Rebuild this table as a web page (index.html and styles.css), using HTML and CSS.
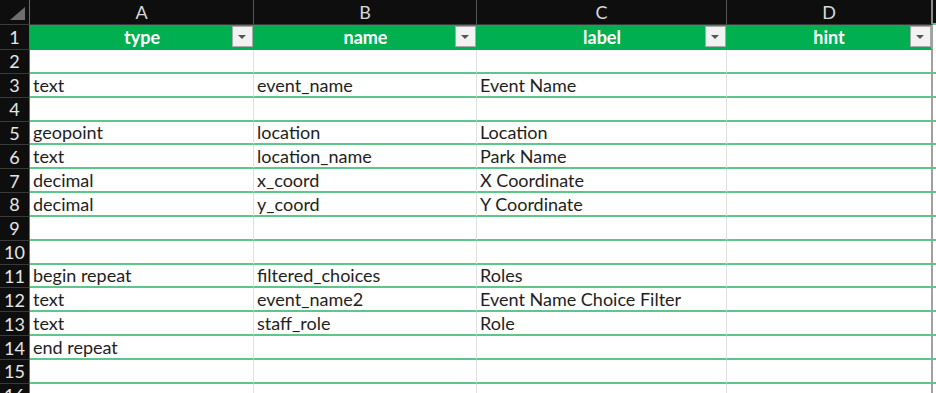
FILE: index.html
```html
<!DOCTYPE html>
<html>
<head>
<meta charset="utf-8">
<link rel="stylesheet" href="styles.css">
</head>
<body>
<div class="sheet">
  <div class="row colhead">
    <div class="rh corner"><span class="tri"></span></div>
    <div class="ch">A</div>
    <div class="ch">B</div>
    <div class="ch">C</div>
    <div class="ch last">D</div>
    <div class="ch rest"></div>
  </div>
  <div class="row thead">
    <div class="rh">1</div>
    <div class="th">type<span class="dd"></span></div>
    <div class="th">name<span class="dd"></span></div>
    <div class="th">label<span class="dd"></span></div>
    <div class="th last">hint<span class="dd"></span></div>
    <div class="rest"></div>
  </div>
  <div class="row"><div class="rh">2</div><div class="c"></div><div class="c"></div><div class="c"></div><div class="c last"></div><div class="rest"></div></div>
  <div class="row"><div class="rh">3</div><div class="c">text</div><div class="c">event_name</div><div class="c">Event Name</div><div class="c last"></div><div class="rest"></div></div>
  <div class="row"><div class="rh">4</div><div class="c"></div><div class="c"></div><div class="c"></div><div class="c last"></div><div class="rest"></div></div>
  <div class="row"><div class="rh">5</div><div class="c">geopoint</div><div class="c">location</div><div class="c">Location</div><div class="c last"></div><div class="rest"></div></div>
  <div class="row"><div class="rh">6</div><div class="c">text</div><div class="c">location_name</div><div class="c">Park Name</div><div class="c last"></div><div class="rest"></div></div>
  <div class="row"><div class="rh">7</div><div class="c">decimal</div><div class="c">x_coord</div><div class="c">X Coordinate</div><div class="c last"></div><div class="rest"></div></div>
  <div class="row"><div class="rh">8</div><div class="c">decimal</div><div class="c">y_coord</div><div class="c">Y Coordinate</div><div class="c last"></div><div class="rest"></div></div>
  <div class="row"><div class="rh">9</div><div class="c"></div><div class="c"></div><div class="c"></div><div class="c last"></div><div class="rest"></div></div>
  <div class="row"><div class="rh">10</div><div class="c"></div><div class="c"></div><div class="c"></div><div class="c last"></div><div class="rest"></div></div>
  <div class="row"><div class="rh">11</div><div class="c">begin repeat</div><div class="c">filtered_choices</div><div class="c">Roles</div><div class="c last"></div><div class="rest"></div></div>
  <div class="row"><div class="rh">12</div><div class="c">text</div><div class="c">event_name2</div><div class="c">Event Name Choice Filter</div><div class="c last"></div><div class="rest"></div></div>
  <div class="row"><div class="rh">13</div><div class="c">text</div><div class="c">staff_role</div><div class="c">Role</div><div class="c last"></div><div class="rest"></div></div>
  <div class="row"><div class="rh">14</div><div class="c">end repeat</div><div class="c"></div><div class="c"></div><div class="c last"></div><div class="rest"></div></div>
  <div class="row"><div class="rh">15</div><div class="c"></div><div class="c"></div><div class="c"></div><div class="c last"></div><div class="rest"></div></div>
  <div class="row"><div class="rh">16</div><div class="c"></div><div class="c"></div><div class="c"></div><div class="c last"></div><div class="rest"></div></div>
</div>
</body>
</html>
```

FILE: styles.css
```css
html, body {
  margin: 0;
  padding: 0;
  background: #ffffff;
  overflow: hidden;
}
.sheet {
  width: 936px;
  height: 393px;
  overflow: hidden;
  font-family: Lato, "Liberation Sans", sans-serif;
  font-size: 18px;
  color: #1e1e1e;
}
.row {
  display: grid;
  grid-template-columns: 30px 224px 223px 250px 206px 1fr;
  height: 23.85px;
  box-sizing: border-box;
}
.row > div {
  box-sizing: border-box;
}
.colhead {
  height: 25px;
  background: #0e0e0e;
}
.thead {
  height: 25px;
}
.rh {
  background: #0e0e0e;
  color: #e6e6e6;
  border-right: 1px solid #6a6a6a;
  border-bottom: 1px solid #3a3a3a;
  display: flex;
  align-items: center;
  justify-content: center;
  font-size: 18px;
}
.corner {
  position: relative;
  border-bottom: 1px solid #3a3a3a;
}
.tri {
  position: absolute;
  right: 4px;
  bottom: 4px;
  width: 0;
  height: 0;
  border-left: 15px solid transparent;
  border-bottom: 13px solid #6e6e6e;
}
.ch {
  color: #d8d8d8;
  border-right: 1px solid #555555;
  border-bottom: 1px solid #3a3a3a;
  display: flex;
  align-items: center;
  justify-content: center;
}
.ch.last {
  border-right: 2px solid #8a8a8a;
}
.ch.rest {
  border-right: none;
}
.th {
  position: relative;
  background: #00b050;
  color: #ffffff;
  font-weight: 700;
  display: flex;
  align-items: center;
  justify-content: center;
  border-bottom: 1px solid #00b050;
}
.th.last {
  border-right: 2px solid #a0a0a0;
}
.dd {
  position: absolute;
  right: 1px;
  top: 1px;
  width: 21px;
  height: 21px;
  box-sizing: border-box;
  border: 1px solid #a9a9a9;
  background: #f2f2f2;
}
.th.last .dd {
  right: 0;
}
.dd::after {
  content: "";
  position: absolute;
  left: 5px;
  top: 8px;
  border-left: 4px solid transparent;
  border-right: 4px solid transparent;
  border-top: 4px solid #555555;
}
.c {
  border-right: 1px solid #e0e0e0;
  border-bottom: 2px solid #5cc68b;
  padding: 0 3px;
  display: flex;
  align-items: flex-end;
  padding-bottom: 0;
  white-space: nowrap;
  overflow: hidden;
}
.c.last {
  border-right: 2px solid #a0a0a0;
}
.rest {
  border-bottom: 2px solid #5cc68b;
}
.thead .rest {
  border-bottom: none;
}
```
